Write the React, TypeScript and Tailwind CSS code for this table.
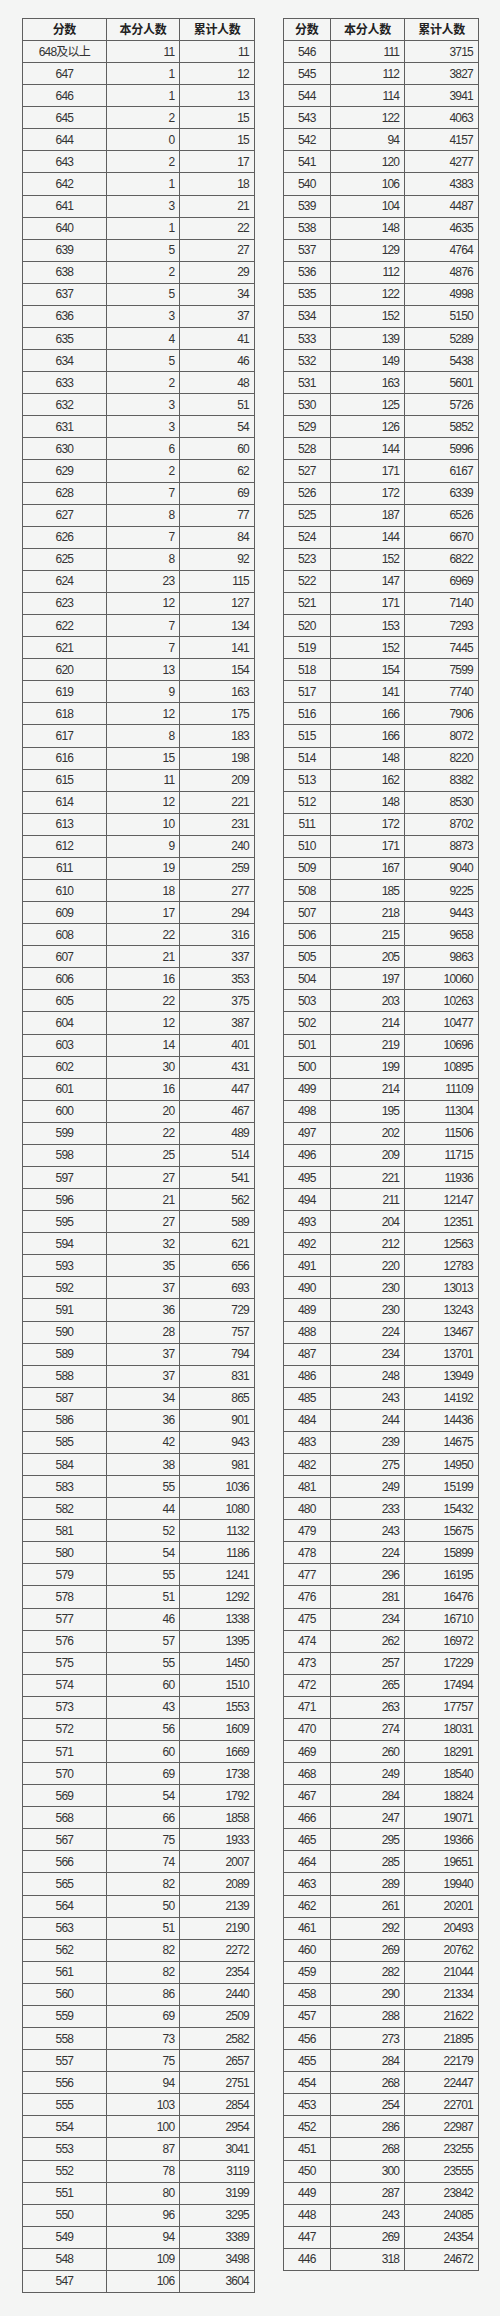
const leftCounts = [
  11, 1, 1, 2, 0, 2, 1, 3, 1, 5, 2, 5, 3, 4, 5, 2, 3, 3, 6, 2, 7, 8, 7, 8, 23, 12, 7, 7, 13, 9, 12, 8, 15, 11,
  12, 10, 9, 19, 18, 17, 22, 21, 16, 22, 12, 14, 30, 16, 20, 22, 25, 27, 21, 27, 32, 35, 37, 36, 28, 37, 37,
  34, 36, 42, 38, 55, 44, 52, 54, 55, 51, 46, 57, 55, 60, 43, 56, 60, 69, 54, 66, 75, 74, 82, 50, 51, 82, 82,
  86, 69, 73, 75, 94, 103, 100, 87, 78, 80, 96, 94, 109, 106,
];

const rightCounts = [
  111, 112, 114, 122, 94, 120, 106, 104, 148, 129, 112, 122, 152, 139, 149, 163, 125, 126, 144, 171, 172, 187,
  144, 152, 147, 171, 153, 152, 154, 141, 166, 166, 148, 162, 148, 172, 171, 167, 185, 218, 215, 205, 197, 203,
  214, 219, 199, 214, 195, 202, 209, 221, 211, 204, 212, 220, 230, 230, 224, 234, 248, 243, 244, 239, 275, 249,
  233, 243, 224, 296, 281, 234, 262, 257, 265, 263, 274, 260, 249, 284, 247, 295, 285, 289, 261, 292, 269, 282,
  290, 288, 273, 284, 268, 254, 286, 268, 300, 287, 243, 269, 318,
];

type Row = { score: string; count: number; total: number };

function buildRows(): [Row[], Row[]] {
  let total = 0;
  const left = leftCounts.map((count, i) => {
    total += count;
    return { score: i === 0 ? "648及以上" : String(648 - i), count, total };
  });
  const right = rightCounts.map((count, i) => {
    total += count;
    return { score: String(546 - i), count, total };
  });
  return [left, right];
}

function ScoreTable({ rows, cols }: { rows: Row[]; cols: string }) {
  const cell = "border-r border-b border-[#5f5f5f] flex items-center";
  return (
    <div className={`grid ${cols} border-l border-t border-[#5f5f5f] self-start`}>
      {["分数", "本分人数", "累计人数"].map((h) => (
        <div key={h} className={`${cell} h-[22px] justify-center font-bold text-[#222] tracking-[-0.3px]`}>
          {h}
        </div>
      ))}
      {rows.map((r) => (
        <div key={r.score} className="contents">
          <div className={`${cell} h-[22.08px] justify-center`}>{r.score}</div>
          <div className={`${cell} h-[22.08px] justify-end pr-[5px]`}>{r.count}</div>
          <div className={`${cell} h-[22.08px] justify-end pr-[5px]`}>{r.total}</div>
        </div>
      ))}
    </div>
  );
}

export default function App() {
  const [left, right] = buildRows();
  return (
    <div
      className="min-h-[2316px] w-[500px] bg-[#f4f5f4] pl-[22px] pt-[18px] text-[12px] tracking-[-0.8px] text-[#333]"
      style={{ fontFamily: '"Liberation Sans", Arial, "Noto Sans CJK SC", sans-serif' }}
    >
      <div className="flex gap-[28px]">
        <ScoreTable rows={left} cols="grid-cols-[83.7px_73.6px_74.7px]" />
        <ScoreTable rows={right} cols="grid-cols-[46.7px_74.6px_73.7px]" />
      </div>
    </div>
  );
}
